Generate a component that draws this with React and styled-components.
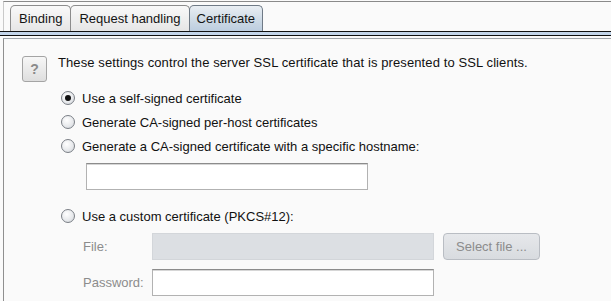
import React from "react";
import styled, { createGlobalStyle, css } from "styled-components";

const Global = createGlobalStyle`
  html, body { margin: 0; padding: 0; background: #fafafa; }
  body { font-family: "Liberation Sans", Arial, sans-serif; font-size: 13px; color: #111; overflow: hidden; }
`;

const Page = styled.div`
  width: 611px;
  height: 301px;
  padding-top: 1px;
  box-sizing: border-box;
  display: flex;
  flex-direction: column;
  background: #fafafa;
`;

const TabArea = styled.div`
  margin-left: 3px;
  height: 29px;
  border-top: 1px solid #8a8a8a;
  border-left: 1px solid #c9c9c9;
  display: flex;
  align-items: flex-end;
  padding-left: 7px;
`;

const Tab = styled.div`
  height: 26px;
  box-sizing: border-box;
  padding: 0 ${(p) => (p.$active ? 7 : 8)}px;
  display: flex;
  align-items: center;
  font-size: 13px;
  color: #141414;
  border: 1px solid #8c8c8c;
  border-bottom: none;
  border-radius: 5px 5px 0 0;
  margin-left: -1px;
  background: linear-gradient(#f9f9f9, #e6e6e6);
  ${(p) =>
    p.$active &&
    css`
      border-color: #6f7a86;
      background: linear-gradient(#e9eef3, #c8d6e3 70%, #bccddf);
    `}
`;

const Strip = styled.div`
  height: 3px;
  border-top: 1px solid #111;
  border-bottom: 1px solid #111;
  background: #c3d5ea;
`;

const Panel = styled.div`
  flex: 1;
  margin-top: 2px;
  margin-left: 3px;
  border-top: 1px solid #9da3aa;
  border-left: 1px solid #8f8f8f;
  padding: 17px 0 0 18px;
  display: flex;
  flex-direction: column;
`;

const Header = styled.div`
  display: flex;
  align-items: flex-start;
  gap: 11px;
`;

const HelpButton = styled.div`
  width: 25px;
  height: 26px;
  box-sizing: border-box;
  border: 1px solid #a4a4a4;
  border-radius: 3px;
  background: linear-gradient(#f7f7f7, #dedede);
  display: flex;
  align-items: center;
  justify-content: center;
  font-weight: bold;
  font-size: 14px;
  color: #8a8a8a;
`;

const Intro = styled.div`
  line-height: 14px;
  font-size: 13px;
  letter-spacing: 0.1px;
  color: #111;
`;

const Options = styled.div`
  margin-top: 4px;
  padding-left: 39px;
  display: flex;
  flex-direction: column;
`;

const RadioRow = styled.label`
  height: 24px;
  display: flex;
  align-items: center;
  gap: 7px;
  margin-top: ${(p) => p.$mt || 0}px;
`;

const RadioCircle = styled.span`
  width: 14px;
  height: 14px;
  box-sizing: border-box;
  border-radius: 50%;
  border: 1px solid #7a7f86;
  background: radial-gradient(circle at 40% 35%, #ffffff, #e6e8eb 60%, #c9cdd2);
  display: flex;
  align-items: center;
  justify-content: center;
  &::after {
    content: "";
    width: 6px;
    height: 6px;
    border-radius: 50%;
    background: ${(p) => (p.$checked ? "#111" : "transparent")};
  }
`;

const TextInput = styled.div`
  width: 282px;
  height: 27px;
  box-sizing: border-box;
  margin-top: ${(p) => p.$mt || 0}px;
  margin-left: ${(p) => p.$ml || 0}px;
  border: 1px solid #b2b2b2;
  border-top-color: #8c8c8c;
  background: ${(p) => (p.$disabled ? "#dcdfe3" : "#fff")};
  ${(p) =>
    p.$disabled
      ? css`
          border-color: #d3d6da;
        `
      : css`
          box-shadow: inset 0 1px 0 #d6d6d6;
        `}
`;

const FieldRow = styled.div`
  display: flex;
  align-items: center;
  padding-left: 22px;
  margin-top: ${(p) => p.$mt || 0}px;
  gap: 9px;
`;

const FieldLabel = styled.span`
  width: 69px;
  margin-right: -9px;
  color: #8c8c8c;
`;

const FileButton = styled.div`
  width: 97px;
  height: 27px;
  box-sizing: border-box;
  border: 1px solid #b9bdc3;
  border-radius: 4px;
  background: linear-gradient(#e6e8eb, #d8dbdf);
  color: #8c8c8c;
  display: flex;
  align-items: center;
  justify-content: center;
`;

export default function App() {
  return (
    <Page>
      <Global />
      <TabArea>
        <Tab>Binding</Tab>
        <Tab>Request handling</Tab>
        <Tab $active>Certificate</Tab>
      </TabArea>
      <Strip />
      <Panel>
        <Header>
          <HelpButton>?</HelpButton>
          <Intro>These settings control the server SSL certificate that is presented to SSL clients.</Intro>
        </Header>
        <Options>
          <RadioRow>
            <RadioCircle $checked />
            Use a self-signed certificate
          </RadioRow>
          <RadioRow>
            <RadioCircle />
            Generate CA-signed per-host certificates
          </RadioRow>
          <RadioRow>
            <RadioCircle />
            Generate a CA-signed certificate with a specific hostname:
          </RadioRow>
          <TextInput $mt={5} $ml={25} />
          <RadioRow $mt={14}>
            <RadioCircle />
            Use a custom certificate (PKCS#12):
          </RadioRow>
          <FieldRow $mt={5}>
            <FieldLabel>File:</FieldLabel>
            <TextInput $disabled />
            <FileButton>Select file ...</FileButton>
          </FieldRow>
          <FieldRow $mt={9}>
            <FieldLabel>Password:</FieldLabel>
            <TextInput />
          </FieldRow>
        </Options>
      </Panel>
    </Page>
  );
}
